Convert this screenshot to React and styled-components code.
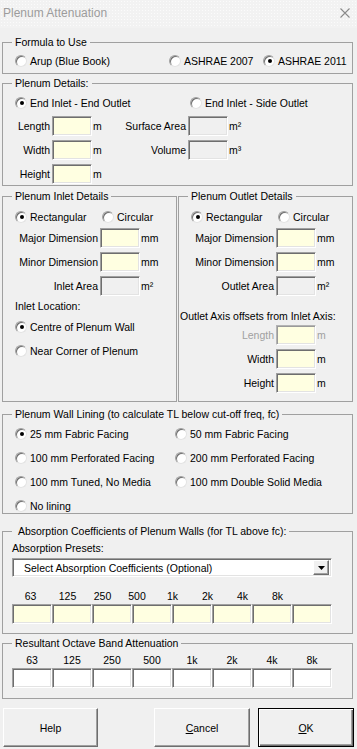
import React from 'react'
import styled, { createGlobalStyle } from 'styled-components'

const GlobalStyle = createGlobalStyle`
  html, body {
    margin: 0;
    padding: 0;
    background: #f0f0f0;
  }
`

const Window = styled.div`
  width: 357px;
  height: 749px;
  display: flex;
  flex-direction: column;
  background: #f0f0f0;
  overflow: hidden;
  font-family: "Liberation Sans", Arial, sans-serif;
  font-size: 10.5px;
  color: #000;
`

const TitleBar = styled.div`
  height: 28px;
  flex: none;
  display: flex;
  align-items: center;
  justify-content: space-between;
  padding: 0 7px 2px 3px;
  box-sizing: border-box;
  background-color: #f2f2f2;
  background-image: radial-gradient(#fbfbfb 0.7px, transparent 0.9px);
  background-size: 3px 3px;
`

const Title = styled.span`
  font-size: 12px;
  color: #9c9c9c;
`

const Body = styled.div`
  display: flex;
  flex-direction: column;
  padding: 8px 0 0 2px;
`

const Frame = styled.fieldset`
  margin: ${({ $mt }) => $mt || 0}px 0 0 0;
  padding: 0;
  width: ${({ $w }) => $w || 351}px;
  height: ${({ $h }) => $h}px;
  box-sizing: border-box;
  border: 1px solid #a0a0a0;
  min-inline-size: 0;
  flex: none;
`

const Legend = styled.legend`
  margin-left: 9px;
  padding: 0 3px;
  font-size: 10.5px;
  line-height: 13px;
  white-space: nowrap;
`

const RadioLabel = styled.div`
  display: flex;
  align-items: center;
  gap: 3px;
  height: 13px;
  white-space: nowrap;
  margin-top: ${({ $mt }) => $mt || 0}px;
`

const RadioDot = styled.span`
  width: 12px;
  height: 12px;
  flex: none;
  box-sizing: border-box;
  border-radius: 50%;
  background: #fff;
  border: 1px solid;
  border-color: #a0a0a0 #e3e3e3 #e3e3e3 #a0a0a0;
  box-shadow: inset 1px 1px 0 #6e6e6e;
  display: flex;
  align-items: center;
  justify-content: center;

  &::after {
    content: '';
    width: 4px;
    height: 4px;
    border-radius: 50%;
    background: ${({ $on }) => ($on ? '#000' : 'transparent')};
    margin: 1px 0 0 1px;
  }
`

const Radio = ({ on, mt, children }) => (
  <RadioLabel $mt={mt}>
    <RadioDot $on={on} />
    {children}
  </RadioLabel>
)

const RadioRow = styled.div`
  display: grid;
  grid-template-columns: ${({ $cols }) => $cols};
  padding: ${({ $pt }) => $pt || 0}px 0 0 12px;
`

const TextBox = styled.div`
  width: 40px;
  height: 20px;
  box-sizing: border-box;
  border: 1px solid;
  border-color: ${({ $dim }) => ($dim ? '#b4b4b4 #fff #fff #b4b4b4' : '#a0a0a0 #fff #fff #a0a0a0')};
  box-shadow: inset 1px 1px 0 ${({ $dim }) => ($dim ? '#9a9a9a' : '#6e6e6e')}, inset -1px -1px 0 #e3e3e3;
  background: ${({ $tone }) =>
    $tone === 'gray' ? '#f0f0f0' : $tone === 'white' ? '#fff' : '#ffffe1'};
`

const DetailsRow = styled.div`
  display: grid;
  grid-template-columns: 49px 40px 20px 76px 40px auto;
  align-items: center;
  height: 20px;
  margin-top: ${({ $mt }) => $mt || 0}px;
`

const FieldLabel = styled.span`
  text-align: right;
  padding-right: 2px;
  white-space: nowrap;
  color: ${({ $dim }) => ($dim ? '#a0a0a0' : '#000')};
`

const Unit = styled.span`
  padding-left: 1px;
  white-space: nowrap;
  color: ${({ $dim }) => ($dim ? '#a0a0a0' : '#000')};
`

const Columns = styled.div`
  display: flex;
  gap: 1px;
  margin-top: 4px;
`

const DimGrid = styled.div`
  display: grid;
  grid-template-columns: 97px 40px auto;
  grid-auto-rows: 20px;
  row-gap: 4px;
  align-items: center;
  margin-top: ${({ $mt }) => $mt || 0}px;
`

const Caption = styled.div`
  height: 13px;
  line-height: 13px;
  white-space: nowrap;
  margin-top: ${({ $mt }) => $mt || 0}px;
  padding-left: ${({ $pl }) => $pl || 0}px;
`

const Stack = styled.div`
  display: flex;
  flex-direction: column;
  padding-left: ${({ $pl }) => $pl || 0}px;
`

const LiningGrid = styled.div`
  display: grid;
  grid-template-columns: 160px auto;
  grid-auto-rows: 13px;
  row-gap: 11px;
  padding: 6px 0 0 12px;
`

const Select = styled.div`
  width: 320px;
  height: 19px;
  margin-top: 3px;
  box-sizing: border-box;
  display: flex;
  align-items: center;
  border: 1px solid;
  border-color: #a0a0a0 #fff #fff #a0a0a0;
  box-shadow: inset 1px 1px 0 #6e6e6e, inset -1px -1px 0 #e3e3e3;
  background: #fff;
`

const SelectText = styled.span`
  flex: 1;
  padding-left: 11px;
  white-space: nowrap;
`

const DropButton = styled.div`
  width: 16px;
  height: 15px;
  margin-right: 2px;
  box-sizing: border-box;
  display: flex;
  align-items: center;
  justify-content: center;
  background: #f0f0f0;
  border: 1px solid;
  border-color: #fff #6e6e6e #6e6e6e #fff;
  box-shadow: inset -1px -1px 0 #a0a0a0;
`

const BandLabels = styled.div`
  display: grid;
  grid-template-columns: ${({ $cols }) => $cols};
  height: 13px;
  line-height: 13px;
  margin-top: ${({ $mt }) => $mt || 0}px;
  text-align: center;
`

const BandBoxes = styled.div`
  display: grid;
  grid-template-columns: repeat(8, 40px);
  margin-top: 1px;
`

const ButtonRow = styled.div`
  display: flex;
  margin-top: 9px;
  padding-left: 1px;
`

const Button = styled.div`
  width: ${({ $w }) => $w}px;
  height: 39px;
  margin-left: ${({ $ml }) => $ml || 0}px;
  box-sizing: border-box;
  display: flex;
  align-items: center;
  justify-content: center;
  background: #f0f0f0;
  border: 1px solid;
  border-color: ${({ $def }) => ($def ? '#000' : '#fff #6e6e6e #6e6e6e #fff')};
  box-shadow: ${({ $def }) =>
    $def
      ? 'inset 1px 1px 0 #fff, inset -1px -1px 0 #6e6e6e, inset -2px -2px 0 #a0a0a0'
      : 'inset -1px -1px 0 #a0a0a0'};
`

const Key = styled.span`
  text-decoration: underline;
`

const bands = ['63', '125', '250', '500', '1k', '2k', '4k', '8k']

export default function App() {
  return (
    <>
      <GlobalStyle />
      <Window>
        <TitleBar>
          <Title>Plenum Attenuation</Title>
          <svg width="10" height="10" viewBox="0 0 10 10">
            <path d="M0.5 0.5 L9.5 9.5 M9.5 0.5 L0.5 9.5" stroke="#8a8a8a" strokeWidth="1.1" fill="none" />
          </svg>
        </TitleBar>

        <Body>
          <Frame $h={38}>
            <Legend>Formula to Use</Legend>
            <RadioRow $cols="154px 94px auto" $pt={5}>
              <Radio>Arup (Blue Book)</Radio>
              <Radio>ASHRAE 2007</Radio>
              <Radio on>ASHRAE 2011</Radio>
            </RadioRow>
          </Frame>

          <Frame $h={109} $mt={3}>
            <Legend>Plenum Details:</Legend>
            <RadioRow $cols="175px auto" $pt={6}>
              <Radio on>End Inlet - End Outlet</Radio>
              <Radio>End Inlet - Side Outlet</Radio>
            </RadioRow>
            <DetailsRow $mt={7}>
              <FieldLabel>Length</FieldLabel>
              <TextBox />
              <Unit>m</Unit>
              <FieldLabel>Surface Area</FieldLabel>
              <TextBox $tone="gray" />
              <Unit>m²</Unit>
            </DetailsRow>
            <DetailsRow $mt={4}>
              <FieldLabel>Width</FieldLabel>
              <TextBox />
              <Unit>m</Unit>
              <FieldLabel>Volume</FieldLabel>
              <TextBox $tone="gray" />
              <Unit>m³</Unit>
            </DetailsRow>
            <DetailsRow $mt={4}>
              <FieldLabel>Height</FieldLabel>
              <TextBox />
              <Unit>m</Unit>
            </DetailsRow>
          </Frame>

          <Columns>
            <Frame $h={212} $w={175}>
              <Legend>Plenum Inlet Details</Legend>
              <RadioRow $cols="87px auto" $pt={7}>
                <Radio on>Rectangular</Radio>
                <Radio>Circular</Radio>
              </RadioRow>
              <DimGrid $mt={5}>
                <FieldLabel>Major Dimension</FieldLabel>
                <TextBox />
                <Unit>mm</Unit>
                <FieldLabel>Minor Dimension</FieldLabel>
                <TextBox />
                <Unit>mm</Unit>
                <FieldLabel>Inlet Area</FieldLabel>
                <TextBox $tone="gray" />
                <Unit>m²</Unit>
              </DimGrid>
              <Stack $pl={12}>
                <Caption $mt={4}>Inlet Location:</Caption>
                <Radio on mt={7}>Centre of Plenum Wall</Radio>
                <Radio mt={11}>Near Corner of Plenum</Radio>
              </Stack>
            </Frame>

            <Frame $h={212} $w={175}>
              <Legend>Plenum Outlet Details</Legend>
              <RadioRow $cols="87px auto" $pt={7}>
                <Radio on>Rectangular</Radio>
                <Radio>Circular</Radio>
              </RadioRow>
              <DimGrid $mt={5}>
                <FieldLabel>Major Dimension</FieldLabel>
                <TextBox />
                <Unit>mm</Unit>
                <FieldLabel>Minor Dimension</FieldLabel>
                <TextBox />
                <Unit>mm</Unit>
                <FieldLabel>Outlet Area</FieldLabel>
                <TextBox $tone="gray" />
                <Unit>m²</Unit>
              </DimGrid>
              <Caption $mt={14} $pl={1}>Outlet Axis offsets from Inlet Axis:</Caption>
              <DimGrid $mt={2}>
                <FieldLabel $dim>Length</FieldLabel>
                <TextBox $dim />
                <Unit $dim>m</Unit>
                <FieldLabel>Width</FieldLabel>
                <TextBox />
                <Unit>m</Unit>
                <FieldLabel>Height</FieldLabel>
                <TextBox />
                <Unit>m</Unit>
              </DimGrid>
            </Frame>
          </Columns>

          <Frame $h={106} $mt={6}>
            <Legend>Plenum Wall Lining (to calculate TL below cut-off freq, fc)</Legend>
            <LiningGrid>
              <Radio on>25 mm Fabric Facing</Radio>
              <Radio>50 mm Fabric Facing</Radio>
              <Radio>100 mm Perforated Facing</Radio>
              <Radio>200 mm Perforated Facing</Radio>
              <Radio>100 mm Tuned, No Media</Radio>
              <Radio>100 mm Double Solid Media</Radio>
              <Radio>No lining</Radio>
            </LiningGrid>
          </Frame>

          <Frame $h={109} $mt={11}>
            <Legend>&nbsp;Absorption Coefficients of Plenum Walls (for TL above fc):</Legend>
            <Stack $pl={9}>
              <Caption $mt={4}>Absorption Presets:</Caption>
              <Select>
                <SelectText>Select Absorption Coefficients (Optional)</SelectText>
                <DropButton>
                  <svg width="7" height="4" viewBox="0 0 7 4">
                    <path d="M0 0 H7 L3.5 4 Z" fill="#000" />
                  </svg>
                </DropButton>
              </Select>
              <BandLabels $cols="37px 37px 33px 36px 35px 35px 35px 35px" $mt={13}>
                {bands.map((b) => (
                  <span key={b}>{b}</span>
                ))}
              </BandLabels>
              <BandBoxes>
                {bands.map((b) => (
                  <TextBox key={b} />
                ))}
              </BandBoxes>
            </Stack>
          </Frame>

          <Frame $h={62} $mt={3}>
            <Legend>Resultant Octave Band Attenuation</Legend>
            <Stack $pl={9}>
              <BandLabels $cols="repeat(8, 40px)" $mt={4}>
                {bands.map((b) => (
                  <span key={b}>{b}</span>
                ))}
              </BandLabels>
              <BandBoxes>
                {bands.map((b) => (
                  <TextBox key={b} $tone="white" />
                ))}
              </BandBoxes>
            </Stack>
          </Frame>

          <ButtonRow>
            <Button $w={95}>Help</Button>
            <Button $w={96} $ml={56}>
              <Key>C</Key>ancel
            </Button>
            <Button $w={96} $ml={8} $def>
              <Key>O</Key>K
            </Button>
          </ButtonRow>
        </Body>
      </Window>
    </>
  )
}
